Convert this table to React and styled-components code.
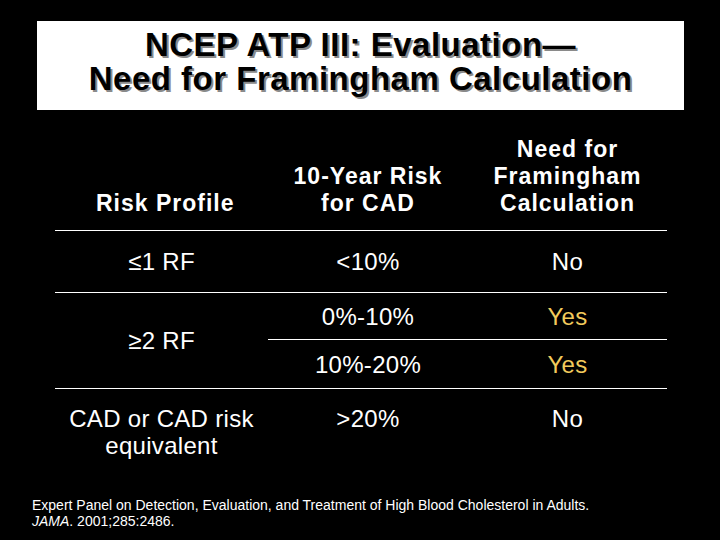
import React from "react";
import styled, { createGlobalStyle } from "styled-components";

const GlobalStyle = createGlobalStyle`
  html, body {
    margin: 0;
    padding: 0;
    background: #000;
  }
  body {
    font-family: "Liberation Sans", Arial, sans-serif;
    color: #fff;
  }
`;

const Slide = styled.div`
  width: 720px;
  height: 540px;
  background: #000;
  overflow: hidden;
  display: flex;
  flex-direction: column;
`;

const TitleBox = styled.div`
  margin: 21px 36px 0 37px;
  height: 89px;
  box-sizing: border-box;
  padding-bottom: 7px;
  background: #fff;
  display: flex;
  align-items: center;
  justify-content: center;
`;

const Title = styled.h1`
  margin: 0;
  font-size: 33px;
  line-height: 34px;
  letter-spacing: 0.5px;
  font-weight: bold;
  color: #000;
  text-align: center;
  text-shadow: 2px 2px 0 #8a8a8a;
`;

const Table = styled.div`
  margin: 26px 0 0 55px;
  width: 612px;
  display: grid;
  grid-template-columns: 213px 200px 199px;
`;

const HeadCell = styled.div`
  display: flex;
  align-items: flex-end;
  justify-content: ${(p) => (p.$left ? "flex-start" : "center")};
  padding: 0 0 13px ${(p) => (p.$left ? "41px" : "0")};
  border-bottom: 1px solid #fff;
  font-size: 23px;
  line-height: 27px;
  font-weight: bold;
  text-align: center;
  letter-spacing: 1px;
`;

const Cell = styled.div`
  display: flex;
  align-items: ${(p) => (p.$top ? "flex-start" : "center")};
  justify-content: center;
  text-align: center;
  height: ${(p) => p.$h}px;
  padding-top: ${(p) => (p.$top ? "16px" : "0")};
  box-sizing: border-box;
  border-bottom: ${(p) => (p.$line ? "1px solid #fff" : "none")};
  grid-row: ${(p) => p.$rows || "auto"};
  font-size: 24px;
  line-height: 27px;
  letter-spacing: 0.3px;
  color: ${(p) => (p.$yes ? "#f2ca5c" : "#fff")};
`;

const Footer = styled.div`
  margin: auto 0 11px 32px;
  font-size: 14px;
  line-height: 16px;
  color: #fff;
`;

export default function App() {
  return (
    <>
      <GlobalStyle />
      <Slide>
        <TitleBox>
          <Title>
            NCEP ATP III: Evaluation—
            <br />
            Need for Framingham Calculation
          </Title>
        </TitleBox>
        <Table>
          <HeadCell $left>Risk Profile</HeadCell>
          <HeadCell>
            10-Year Risk
            <br />
            for CAD
          </HeadCell>
          <HeadCell>
            Need for
            <br />
            Framingham
            <br />
            Calculation
          </HeadCell>

          <Cell $h={62} $line>≤1 RF</Cell>
          <Cell $h={62} $line>&lt;10%</Cell>
          <Cell $h={62} $line>No</Cell>

          <Cell $h={96} $line $rows="span 2">≥2 RF</Cell>
          <Cell $h={47} $line>0%-10%</Cell>
          <Cell $h={47} $line $yes>Yes</Cell>
          <Cell $h={49} $line>10%-20%</Cell>
          <Cell $h={49} $line $yes>Yes</Cell>

          <Cell $h={80} $top>
            CAD or CAD risk
            <br />
            equivalent
          </Cell>
          <Cell $h={80} $top>&gt;20%</Cell>
          <Cell $h={80} $top>No</Cell>
        </Table>
        <Footer>
          Expert Panel on Detection, Evaluation, and Treatment of High Blood Cholesterol in Adults.
          <br />
          <i>JAMA</i>. 2001;285:2486.
        </Footer>
      </Slide>
    </>
  );
}
